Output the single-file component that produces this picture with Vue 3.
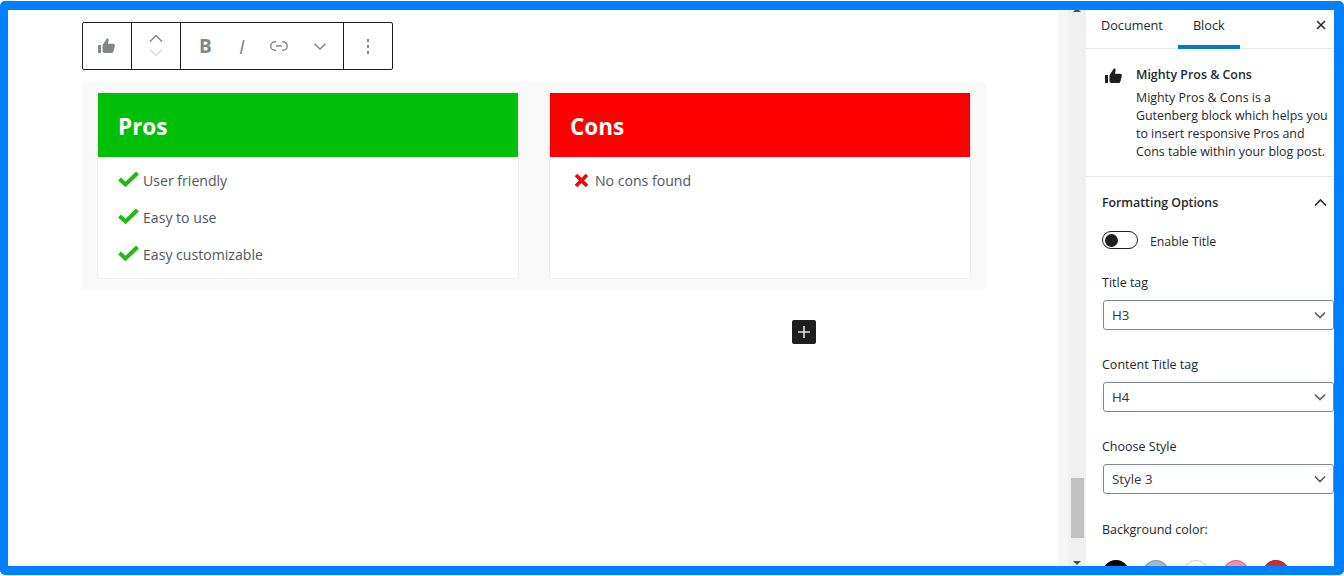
<template>
  <div class="frame">
    <main class="editor">
      <div class="toolbar">
        <div class="tool-group single">
          <svg width="20" height="20" viewBox="0 0 20 20"><path fill="#82878c" d="M1 9h3v8H1zM5.500 9.200 9.500 3c.9-.9 2.400-.2 2.200 1.100L11 7.800h5.200c1.300 0 2 1.100 1.700 2.200l-1.600 5.800c-.2.800-.9 1.200-1.600 1.200H7.500c-1.100 0-2-.9-2-2z"/></svg>
        </div>
        <div class="tool-group mover">
          <svg width="16" height="10" viewBox="0 0 16 10"><path fill="none" stroke="#82878c" stroke-width="1.500" d="M2 8.500 8 2.500l6 6"/></svg>
          <svg width="16" height="10" viewBox="0 0 16 10"><path fill="none" stroke="#dcdcde" stroke-width="1.500" d="M2 1.500l6 6 6-6"/></svg>
        </div>
        <div class="tool-group format">
          <span class="fmt-b">B</span>
          <span class="fmt-i">I</span>
          <svg class="fmt-link" width="18" height="10" viewBox="0 0 18 10"><path fill="none" stroke="#82878c" stroke-width="1.400" d="M6 .8H5a4.200 4.200 0 0 0 0 8.400h1M12 .8h1a4.200 4.200 0 0 1 0 8.400h-1M6 5h6"/></svg>
          <svg class="fmt-more" width="12" height="7" viewBox="0 0 12 7"><path fill="none" stroke="#82878c" stroke-width="1.500" d="M.5.800 6 6l5.500-5.200"/></svg>
        </div>
        <div class="tool-group single dots">
          <i></i><i></i><i></i>
        </div>
      </div>

      <section class="block">
        <article v-for="col in columns" :key="col.title" class="card">
          <h2 :class="['card-head', col.tone]">{{ col.title }}</h2>
          <ul class="card-list">
            <li v-for="item in col.items" :key="item" :class="col.tone">
              <svg v-if="col.tone === 'pros'" class="mark" width="21" height="16" viewBox="0 0 21 16"><path fill="none" stroke="#22bb12" stroke-width="4" d="M1.500 8 7.500 13.500 19.500 2"/></svg>
              <svg v-else class="mark cross" width="15" height="15" viewBox="0 0 15 15"><path fill="none" stroke="#ff0000" stroke-width="3.600" d="M2 2l11 11M13 2 2 13"/></svg>
              <span>{{ item }}</span>
            </li>
          </ul>
        </article>
      </section>

      <button class="inserter" type="button">
        <svg width="14" height="14" viewBox="0 0 14 14"><path fill="none" stroke="#e2e2e2" stroke-width="1.600" d="M7 1v12M1 7h12"/></svg>
      </button>
    </main>

    <div class="gutter"></div>
    <div class="scrollbar">
      <span class="arrow up"></span>
      <span class="thumb"></span>
      <span class="arrow down"></span>
    </div>

    <aside class="sidebar">
      <div class="tabs">
        <span class="tab">Document</span>
        <span class="tab active">Block</span>
        <svg class="close" width="12" height="12" viewBox="0 0 12 12"><path fill="none" stroke="#23282d" stroke-width="1.500" d="M2 2l8 8M10 2l-8 8"/></svg>
      </div>

      <div class="info">
        <svg class="info-icon" width="20" height="20" viewBox="0 0 20 20"><path fill="#1e1e1e" d="M1 9h3v8H1zM5.500 9.200 9.500 3c.9-.9 2.400-.2 2.200 1.100L11 7.800h5.200c1.300 0 2 1.100 1.700 2.200l-1.600 5.800c-.2.800-.9 1.200-1.600 1.200H7.500c-1.100 0-2-.9-2-2z"/></svg>
        <div class="info-text">
          <h3>Mighty Pros &amp; Cons</h3>
          <p>Mighty Pros &amp; Cons is a<br>Gutenberg block which helps you<br>to insert responsive Pros and<br>Cons table within your blog post.</p>
        </div>
      </div>

      <div class="panel">
        <div class="panel-head">
          <h3>Formatting Options</h3>
          <svg width="14" height="9" viewBox="0 0 14 9"><path fill="none" stroke="#23282d" stroke-width="1.600" d="M2 7.500l5.500-5.500 5.500 5.500"/></svg>
        </div>

        <div class="toggle-row">
          <span class="toggle"><i></i></span>
          <span class="toggle-label">Enable Title</span>
        </div>

        <div v-for="field in fields" :key="field.label" class="field">
          <label>{{ field.label }}</label>
          <div class="select">
            <span>{{ field.value }}</span>
            <svg width="12" height="8" viewBox="0 0 12 8"><path fill="none" stroke="#555d66" stroke-width="1.600" d="M1 1.500l5 5 5-5"/></svg>
          </div>
        </div>

        <div class="colors">
          <label>Background color:</label>
          <div class="swatches">
            <span v-for="color in swatches" :key="color" class="swatch" :style="{ background: color }"></span>
          </div>
        </div>
      </div>
    </aside>
  </div>
</template>

<script setup>
const columns = [
  { title: 'Pros', tone: 'pros', items: ['User friendly', 'Easy to use', 'Easy customizable'] },
  { title: 'Cons', tone: 'cons', items: ['No cons found'] }
]

const fields = [
  { label: 'Title tag', value: 'H3' },
  { label: 'Content Title tag', value: 'H4' },
  { label: 'Choose Style', value: 'Style 3' }
]

const swatches = ['#000000', '#abb8c3', '#ffffff', '#f78da7', '#cf2e2e']
</script>

<style>
html, body {
  margin: 0;
  background: #fff;
}
</style>

<style scoped>
.frame {
  box-sizing: border-box;
  width: 1344px;
  height: 574px;
  margin-top: 1px;
  display: flex;
  overflow: hidden;
  background: #fff;
  border: solid #0080ff;
  border-width: 9px 10px 9px 8px;
  border-radius: 5px;
  font-family: "Open Sans", "Noto Sans", sans-serif;
  color: #23282d;
}

.editor {
  flex: 0 0 1050px;
  padding: 12px 0 0 74px;
  box-sizing: border-box;
}

.toolbar {
  display: flex;
  width: 311px;
  height: 48px;
  box-sizing: border-box;
  border: 1px solid #1e1e1e;
  border-radius: 2px;
}

.tool-group {
  display: flex;
  align-items: center;
  justify-content: center;
  border-right: 1px solid #1e1e1e;
  box-sizing: border-box;
}

.tool-group:last-child {
  border-right: none;
}

.single {
  width: 49px;
}

.mover {
  width: 49px;
  flex-direction: column;
  gap: 5px;
  padding-bottom: 1px;
}

.format {
  width: 163px;
  justify-content: flex-start;
  padding-left: 18px;
  color: #82878c;
}

.fmt-b {
  font: 700 19px "Open Sans", sans-serif;
  width: 13px;
}

.fmt-i {
  font: italic 400 20px "Open Sans", sans-serif;
  margin-left: 27px;
  width: 8px;
}

.fmt-link {
  margin-left: 23px;
}

.fmt-more {
  margin-left: 26px;
}

.dots {
  flex-direction: column;
  gap: 3px;
  width: 48px;
}

.dots i {
  display: block;
  width: 2px;
  height: 3px;
  background: #82878c;
}

.block {
  margin-top: 12px;
  width: 904px;
  height: 207px;
  box-sizing: border-box;
  padding: 11px 15px 10px;
  background: #f9f9f9;
  display: flex;
  gap: 30px;
}

.card {
  flex: 0 0 422px;
  box-sizing: border-box;
  background: #fff;
  border: 1px solid #eeeeee;
  border-top: none;
  border-radius: 0 0 3px 3px;
}

.card-head {
  margin: 0;
  height: 64px;
  line-height: 67px;
  padding-left: 20px;
  font-size: 22.500px;
  font-weight: 700;
  color: #fff;
}

.card-head.pros {
  background: #00bf08;
}

.card-head.cons {
  background: #ff0000;
}

.card-list {
  list-style: none;
  margin: 0;
  padding: 5px 0 0 20px;
}

.card-list li {
  display: flex;
  align-items: center;
  height: 37px;
  font-size: 14.100px;
  color: #50575e;
}

.mark {
  margin: -3px 4px 0 0;
}

.cross {
  margin: 0 6px 0 4px;
}

.inserter {
  display: flex;
  align-items: center;
  justify-content: center;
  width: 24px;
  height: 24px;
  margin: 31px 0 0 710px;
  padding: 0;
  border: none;
  border-radius: 2px;
  background: #1e1e1e;
}

.gutter {
  flex: 0 0 10px;
  background: #f5f5f5;
}

.scrollbar {
  flex: 0 0 18px;
  background: #f0f0f0;
  display: flex;
  flex-direction: column;
  align-items: center;
  position: relative;
}

.arrow {
  position: absolute;
  width: 0;
  height: 0;
  border-left: 4px solid transparent;
  border-right: 4px solid transparent;
}

.arrow.up {
  top: -2px;
  border-bottom: 4px solid #505050;
}

.arrow.down {
  bottom: 1px;
  border-top: 4px solid #505050;
}

.thumb {
  position: absolute;
  top: 468px;
  width: 13px;
  height: 60px;
  background: #c1c1c1;
}

.sidebar {
  flex: 0 0 248px;
  background: #fff;
  font-size: 12.500px;
  overflow: hidden;
}

.tabs {
  height: 39px;
  box-sizing: border-box;
  border-bottom: 1px solid #e8eaeb;
  display: flex;
  align-items: flex-start;
  position: relative;
  padding-left: 15px;
}

.tab {
  font-size: 12.700px;
  line-height: 31px;
  height: 39px;
  box-sizing: border-box;
  color: #23282d;
}

.tab.active {
  margin-left: 15px;
  padding: 0 15px;
  border-bottom: 4px solid #007cba;
}

.close {
  position: absolute;
  right: 7px;
  top: 9px;
}

.info {
  display: flex;
  height: 128px;
  box-sizing: border-box;
  padding: 17px 0 0 18px;
  border-bottom: 1px solid #e8eaeb;
}

.info-icon {
  margin: 0 12px 0 0;
  flex: none;
}

.info-text h3 {
  margin: 0;
  font-size: 12.400px;
  font-weight: 600;
  line-height: 17px;
}

.info-text p {
  margin: 6px 0 0;
  font-size: 12.400px;
  line-height: 18px;
  white-space: nowrap;
}

.panel {
  padding: 16px 0 0 16px;
}

.panel-head {
  display: flex;
  justify-content: space-between;
  align-items: center;
  height: 18px;
  padding-right: 7px;
}

.panel-head h3 {
  margin: 0;
  font-size: 12.300px;
  font-weight: 600;
}

.toggle-row {
  display: flex;
  align-items: center;
  margin-top: 20px;
  height: 18px;
  font-size: 12.300px;
  gap: 12px;
}

.toggle-label {
  padding-top: 2px;
}

.toggle {
  width: 36px;
  height: 18px;
  box-sizing: border-box;
  border: 1px solid #1e1e1e;
  border-radius: 9px;
  display: flex;
  align-items: center;
  padding-left: 2px;
}

.toggle i {
  display: block;
  width: 13px;
  height: 13px;
  border-radius: 50%;
  background: #1e1e1e;
}

.field {
  margin-top: 25px;
}

.field:nth-of-type(n + 4) {
  margin-top: 26px;
}

.field label,
.colors label {
  display: block;
  height: 18px;
  line-height: 18px;
  font-size: 12.500px;
}

.select {
  margin: 8px 0 0 1px;
  width: 231px;
  height: 30px;
  box-sizing: border-box;
  border: 1px solid #7e8993;
  border-radius: 3px;
  display: flex;
  align-items: center;
  justify-content: space-between;
  padding: 0 7px 0 8px;
  font-size: 13.300px;
  color: #32373c;
}

.colors {
  margin-top: 27px;
}

.swatches {
  margin: 21px 0 0 1px;
  display: flex;
  gap: 14px;
}

.swatch {
  width: 26px;
  height: 26px;
  flex: none;
  border-radius: 50%;
  box-sizing: border-box;
  box-shadow: inset 0 0 0 1px rgba(0, 0, 0, 0.2);
}
</style>
